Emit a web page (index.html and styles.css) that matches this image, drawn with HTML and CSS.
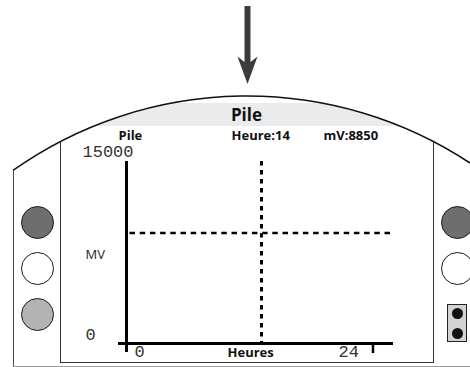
FILE: index.html
```html
<!DOCTYPE html>
<html lang="fr">
<head>
<meta charset="utf-8">
<link rel="stylesheet" href="styles.css">
</head>
<body>
<div class="page">
  <svg class="arrow" width="470" height="96" viewBox="0 0 470 96">
    <polygon points="244.5,6 250.5,6 250.5,62 257.5,56.5 247.5,84 237.5,56.5 244.5,62" fill="#3c3c3c"/>
  </svg>
  <div class="device">
    <div class="body">
      <div class="side side-left">
        <span class="btn dark"></span>
        <span class="btn white"></span>
        <span class="btn light"></span>
      </div>
      <div class="screen">
        <div class="title">Pile</div>
        <div class="status">
          <span>Pile</span>
          <span>Heure:14</span>
          <span>mV:8850</span>
        </div>
        <div class="chart">
          <svg class="plot" width="372" height="220" viewBox="0 0 372 220">
            <line x1="65.5" y1="19" x2="65.5" y2="210" stroke="#000" stroke-width="3"/>
            <line x1="57" y1="201.5" x2="332" y2="201.5" stroke="#000" stroke-width="3"/>
            <line x1="312" y1="203" x2="312" y2="211" stroke="#000" stroke-width="2.5"/>
            <line x1="68.5" y1="91" x2="332" y2="91" stroke="#000" stroke-width="2.5" stroke-dasharray="5.5 4.7"/>
            <line x1="200.5" y1="19" x2="200.5" y2="201" stroke="#000" stroke-width="3" stroke-dasharray="4.5 4.5"/>
          </svg>
          <div class="ymax num">15000</div>
          <div class="yaxis">
            <span class="unit">MV</span>
            <span class="num">0</span>
          </div>
          <div class="xaxis">
            <span class="num x0">0</span>
            <span class="xname">Heures</span>
            <span class="num">24</span>
          </div>
        </div>
      </div>
      <div class="side side-right">
        <span class="btn dark"></span>
        <span class="btn white"></span>
        <span class="plug"><span class="dot"></span><span class="dot"></span></span>
      </div>
    </div>
  </div>
  <svg class="arc" width="470" height="367" viewBox="0 0 470 367">
    <path d="M 13 170.4 A 405 405 0 0 1 470 163" fill="none" stroke="#111" stroke-width="1.5"/>
  </svg>
</div>
</body>
</html>
```
FILE: styles.css
```css
html, body {
  margin: 0;
  padding: 0;
  background: #fff;
}

.page {
  position: relative;
  width: 470px;
  height: 367px;
  overflow: hidden;
  font-family: "Open Sans", "Liberation Sans", sans-serif;
  color: #111;
}

.arrow {
  display: block;
}

.arc {
  position: absolute;
  left: 0;
  top: 0;
  pointer-events: none;
}

.device {
  width: 470px;
  height: 271px;
  clip-path: circle(405px at 247px 405px);
}

.body {
  margin-left: 13px;
  height: 271px;
  box-sizing: border-box;
  border-left: 1.5px solid #4a4a4a;
  border-bottom: 1.5px solid #9c9c9c;
  display: flex;
  align-items: flex-start;
}

.side {
  display: flex;
  flex-direction: column;
  gap: 13px;
  padding-top: 109.5px;
  flex-shrink: 0;
}

.side-left {
  width: 45.5px;
  box-sizing: border-box;
  padding-left: 6.5px;
}

.side-right {
  padding-left: 7px;
}

.btn {
  display: block;
  width: 33px;
  height: 33px;
  box-sizing: border-box;
  border: 1px solid #1a1a1a;
  border-radius: 50%;
  flex-shrink: 0;
}

.btn.dark { background: #6e6e6e; }
.btn.white { background: #fff; }
.btn.light { background: #b3b3b3; }

.plug {
  margin-top: 6.5px;
  margin-left: 6.5px;
  width: 20px;
  height: 38px;
  box-sizing: border-box;
  border: 1px solid #222;
  background: #d2d2d2;
  display: flex;
  flex-direction: column;
  align-items: center;
  padding-top: 3px;
  gap: 9px;
}

.dot {
  display: block;
  width: 11px;
  height: 11px;
  border-radius: 50%;
  background: #111;
}

.screen {
  width: 374px;
  height: 267px;
  box-sizing: border-box;
  border: 1px solid #333;
  border-top: none;
  display: flex;
  flex-direction: column;
  flex-shrink: 0;
}

.title {
  margin-top: 7px;
  height: 23px;
  line-height: 23px;
  background: #ebebeb;
  text-align: center;
  font-weight: 700;
  font-size: 17px;
}

.status {
  margin-top: 2px;
  height: 14px;
  line-height: 14px;
  padding-left: 58px;
  display: grid;
  grid-template-columns: 113px 92px auto;
  font-weight: 700;
  font-size: 13px;
  white-space: nowrap;
}

.chart {
  flex: 1;
  position: relative;
  display: grid;
  grid-template-columns: 64px 1fr;
  grid-template-rows: 19px 184px 1fr;
}

.plot {
  position: absolute;
  left: 0;
  top: 0;
  overflow: visible;
}

.num {
  font-family: "Liberation Mono", "DejaVu Sans Mono", monospace;
  font-size: 17px;
  line-height: 17px;
  color: #333;
}

.ymax {
  grid-column: 1 / -1;
  grid-row: 1;
  padding-left: 22px;
  padding-top: 1.5px;
  line-height: 18px;
  position: relative;
}

.yaxis {
  grid-column: 1;
  grid-row: 2;
  display: flex;
  flex-direction: column;
  align-items: flex-start;
  padding-left: 25px;
  position: relative;
}

.unit {
  margin-top: 87px;
  font-size: 13px;
  line-height: 13px;
  color: #222;
}

.yaxis .num {
  margin-top: 66px;
}

.xaxis {
  grid-column: 1 / -1;
  grid-row: 3;
  display: flex;
  align-items: baseline;
  padding-left: 74px;
  margin-top: -1.5px;
  position: relative;
}

.x0 {
  width: 93px;
}

.xname {
  width: 111px;
  font-weight: 700;
  font-size: 13px;
  line-height: 17px;
}
```
